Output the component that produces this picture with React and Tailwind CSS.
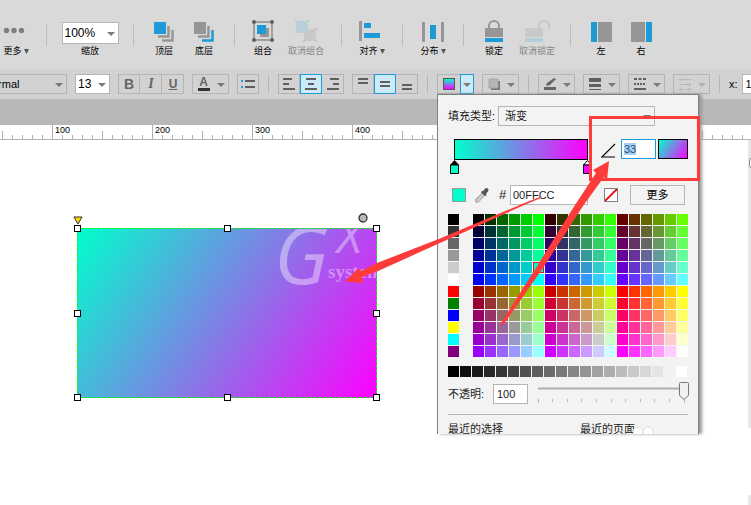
import React, { useEffect, useRef, useState } from 'react';

const hex = (n) => n.toString(16).padStart(2, '0');

const baseColors = [
  '#000000', '#333333', '#666666', '#999999', '#cccccc', '#ffffff',
  '#ff0000', '#008000', '#0000ff', '#ffff00', '#00ffff', '#800080',
];

// web safe colors, 3 blocks of 6x6 on top and 3 below
const webColors = [];
for (let row = 0; row < 12; row++) {
  for (let col = 0; col < 18; col++) {
    const r = (Math.floor(col / 6) + (row > 5 ? 3 : 0)) * 51;
    webColors.push(`#${hex(r)}${hex((col % 6) * 51)}${hex((row % 6) * 51)}`);
  }
}

const grays = Array.from({ length: 20 }, (_, i) => {
  const v = hex(Math.round((255 * i) / 19));
  return `#${v}${v}${v}`;
});

const rulerLabels = ['', '100', '200', '300', '400', '', '', ''];

const Caret = ({ className = 'text-[#7a7a7a]' }) => (
  <svg className={`w-2 h-1 shrink-0 ${className}`} viewBox="0 0 8 4" aria-hidden="true">
    <path d="M0 0h8L4 4z" fill="currentColor" />
  </svg>
);

const Select = ({ label, options, className, selectClass }) => (
  <div className={`relative border border-[#b5b5b5] overflow-hidden shrink-0 ${className}`}>
    <select aria-label={label} className={`block h-full w-full appearance-none bg-transparent outline-none ${selectClass}`}>
      {options.map((o) => (
        <option key={o}>{o}</option>
      ))}
    </select>
    <span className="absolute right-[3px] inset-y-0 flex items-center pt-px pointer-events-none">
      <Caret />
    </span>
  </div>
);

const Divider = () => <div className="w-px h-[22px] mt-6 mx-[10px] bg-[#bdbdbd] shrink-0" />;

const Tool = ({ label, menu, disabled, className = 'w-10', children }) => (
  <button
    type="button"
    disabled={disabled}
    className={`flex flex-col items-center shrink-0 pt-5 ${disabled ? 'text-[#858585]' : 'text-black'} ${className}`}
  >
    {children}
    <span className="flex items-center gap-[2px] mt-[2px] text-[9px] leading-[14px] whitespace-nowrap">
      {label}
      {menu && (
        <svg className="w-[5px] h-[5px]" viewBox="0 0 5 5" aria-hidden="true">
          <path d="M0 0h5L2.5 5z" fill="#555" />
        </svg>
      )}
    </span>
  </button>
);

const Sep = () => <div className="w-px h-[18px] mx-px bg-[#b5b5b5] shrink-0" />;

// group of 22px toolbar buttons
const ButtonGroup = ({ items, active }) => (
  <div className="flex h-5 shrink-0">
    {items.map((item, i) => (
      <button
        key={item.name}
        type="button"
        aria-label={item.name}
        className={`w-[22px] h-5 border flex items-center justify-center ${
          active === i ? 'border-[#1e9bd7] bg-[#cdeaf8]' : 'border-[#b5b5b5]'
        } ${i > 0 && active !== i ? 'border-l-transparent' : ''}`}
      >
        {item.icon}
      </button>
    ))}
  </div>
);

const SplitButton = ({ name, disabled, open, children }) => (
  <div className={`flex h-5 w-[37px] shrink-0 ${open ? '' : 'border border-[#b5b5b5]'}`}>
    <button
      type="button"
      aria-label={name}
      disabled={disabled}
      className={`flex-1 flex items-center justify-center ${open ? 'border border-r-0 border-[#b5b5b5]' : ''}`}
    >
      {children}
    </button>
    <button
      type="button"
      aria-label={`${name} menu`}
      disabled={disabled}
      className={`w-[14px] flex items-center justify-center pt-px ${open ? 'border border-[#1e9bd7] bg-[#cdeaf8]' : ''}`}
    >
      <Caret className={disabled ? 'text-[#b0b0b0]' : 'text-[#7a7a7a]'} />
    </button>
  </div>
);

const Lines = ({ d, w = 14, h = 14, color = '#5f5f5f' }) => (
  <svg width={w} height={h} viewBox={`0 0 ${w} ${h}`} aria-hidden="true">
    <path d={d} stroke={color} strokeWidth="2" fill="none" />
  </svg>
);

const MainToolbar = () => (
  <div className="flex items-start h-[69px] bg-[#d9d9d9] overflow-hidden">
    <Tool label="更多" menu className="w-9 pr-1">
      <svg width="28" height="22" viewBox="0 0 28 22" aria-hidden="true">
        <g fill="#7f7f7f">
          <circle cx="4.500" cy="10.500" r="2.700" />
          <circle cx="12" cy="10.500" r="2.700" />
          <circle cx="19.500" cy="10.500" r="2.700" />
        </g>
      </svg>
    </Tool>
    <Divider />
    <label className="w-[66px] pt-[22px] flex flex-col items-center shrink-0">
      <Select label="缩放" options={['100%', '50%', '200%']} className="w-[57px] h-[22px] bg-white" selectClass="pl-[2px] text-[12px]" />
      <span className="text-[9px] leading-[14px]">缩放</span>
    </label>
    <Divider />
    <Tool label="顶层">
      <svg width="22" height="22" viewBox="0 0 22 22" aria-hidden="true">
        <path d="M19.500 10v10.500H9M15.500 6v10.500H5" stroke="#969696" strokeWidth="2.500" fill="none" />
        <path d="M1 2h12v12H1z" fill="#1e9bd7" />
      </svg>
    </Tool>
    <Tool label="底层">
      <svg width="22" height="22" viewBox="0 0 22 22" aria-hidden="true">
        <path d="M15.500 6v10.500H5" stroke="#969696" strokeWidth="2.500" fill="none" />
        <path d="M19.500 10v10.500H9" stroke="#1e9bd7" strokeWidth="2.500" fill="none" />
        <path d="M1 2h12v12H1z" fill="#969696" />
      </svg>
    </Tool>
    <Divider />
    <Tool label="组合" className="w-9">
      <svg width="22" height="22" viewBox="0 0 22 22" aria-hidden="true">
        <path d="M2 2h18v18H2z" stroke="#666" fill="none" />
        <path d="M8 8h9v9H8z" fill="#969696" />
        <path d="M5 5h9v9H5z" fill="#1e9bd7" />
        <g fill="#5f5f5f">
          <circle cx="2" cy="2" r="2" />
          <circle cx="20" cy="2" r="2" />
          <circle cx="2" cy="20" r="2" />
          <circle cx="20" cy="20" r="2" />
        </g>
      </svg>
    </Tool>
    <Tool label="取消组合" disabled className="w-[50px]">
      <svg width="22" height="22" viewBox="0 0 22 22" aria-hidden="true">
        <path d="M9 9h12v12H9z" fill="#c9c9c9" />
        <path d="M1 1h12v12H1z" fill="#b9cfda" />
        <path d="M0 0h2v2H0zM12 0h2v2h-2zM0 11h2v2H0zM12 11h2v2h-2zM8 8h2v2H8zM20 8h2v2h-2zM8 20h2v2H8zM20 20h2v2h-2z" fill="#bfc5c8" />
      </svg>
    </Tool>
    <Divider />
    <Tool label="对齐" menu>
      <svg width="26" height="22" viewBox="0 0 26 22" aria-hidden="true">
        <path d="M0 1h3v20H0z" fill="#969696" />
        <path d="M5 3h7v5H5zM5 13h16v5H5z" fill="#1e9bd7" />
      </svg>
    </Tool>
    <Divider />
    <Tool label="分布" menu>
      <svg width="22" height="22" viewBox="0 0 22 22" aria-hidden="true">
        <path d="M0 2h3v20H0zM19 2h3v20h-3z" fill="#969696" />
        <path d="M8 5h6v14H8z" fill="#1e9bd7" />
      </svg>
    </Tool>
    <Divider />
    <Tool label="锁定">
      <svg width="22" height="22" viewBox="0 0 22 22" aria-hidden="true">
        <path d="M6 9V6a5 5 0 0 1 10 0V9" stroke="#969696" strokeWidth="2" fill="none" />
        <path d="M2 8h18v9H2z" fill="#969696" />
        <path d="M2 18h18v4H2z" fill="#1e9bd7" />
      </svg>
    </Tool>
    <Tool label="取消锁定" disabled className="w-[46px]">
      <svg width="26" height="22" viewBox="0 0 26 22" aria-hidden="true">
        <path d="M15 9V6a5 5 0 0 1 10 0v3" stroke="#c6c6c6" strokeWidth="2" fill="none" />
        <path d="M1 8h18v9H1z" fill="#c9c9c9" />
        <path d="M1 18h18v4H1z" fill="#b3cedb" />
      </svg>
    </Tool>
    <Divider />
    <Tool label="左">
      <svg width="22" height="22" viewBox="0 0 22 22" aria-hidden="true">
        <path d="M1 2h6v20H1z" fill="#1e9bd7" />
        <path d="M8 2h14v20H8z" fill="#969696" />
      </svg>
    </Tool>
    <Tool label="右">
      <svg width="22" height="22" viewBox="0 0 22 22" aria-hidden="true">
        <path d="M1 2h14v20H1z" fill="#969696" />
        <path d="M16 2h6v20h-6z" fill="#1e9bd7" />
      </svg>
    </Tool>
  </div>
);

const textButtons = [
  { name: 'Bold', icon: <span className="text-[14px] leading-4 font-bold text-[#666]">B</span> },
  { name: 'Italic', icon: <span className="text-[14px] leading-4 font-bold italic font-['Liberation_Serif',serif] text-[#666]">I</span> },
  { name: 'Underline', icon: <span className="text-[12px] leading-4 font-bold underline text-[#666]">U</span> },
];

const alignButtons = [
  { name: 'Align left', icon: <Lines d="M1 2h9M1 7h6M1 12h12" /> },
  { name: 'Align center', icon: <Lines d="M2 2h10M4 7h6M1 12h12" /> },
  { name: 'Align right', icon: <Lines d="M4 2h9M7 7h6M1 12h12" /> },
];

const valignButtons = [
  { name: 'Align top', icon: <Lines d="M2 2h10M2 6h10" /> },
  { name: 'Align middle', icon: <Lines d="M2 5h10M2 9h10" /> },
  { name: 'Align bottom', icon: <Lines d="M2 8h10M2 12h10" /> },
];

const Swatch = ({ color, selected, onClick }) => (
  <button
    type="button"
    aria-label={color}
    onClick={onClick}
    className={`w-[11px] h-[11px] ${selected ? 'border border-[#d02020]' : ''}`}
    style={{ backgroundColor: color }}
  />
);

const FillPanel = () => {
  const angleRef = useRef(null);
  const [color, setColor] = useState('#00ffcc');
  const [angle, setAngle] = useState('33');
  const [opacity, setOpacity] = useState(100);

  useEffect(() => {
    angleRef.current.focus();
    angleRef.current.select();
  }, []);

  return (
    <div className="absolute top-full left-0 z-10 w-[262px] pl-[10px] pr-2 pt-[11px] bg-[#f3f3f3] border border-b-0 border-[#808080] shadow-[3px_0_3px_#999] text-[11px] text-[#222]">
      {/* Fill type */}
      <div className="flex items-center h-5">
        <span className="w-[50px] whitespace-nowrap">填充类型:</span>
        <Select label="填充类型" options={['渐变', '纯色']} className="w-[157px] h-5" selectClass="pl-[6px] text-[11px]" />
      </div>

      {/* Gradient stops and angle */}
      <div className="flex items-start mt-[13px] h-9">
        <div className="w-[142px] pl-[2px] shrink-0">
          <div className="ml-1 w-[134px] h-[21px] border border-black bg-[linear-gradient(90deg,#00ffcc,#ff00ff)]" />
          <div className="flex justify-between w-[142px]">
            <svg width="9" height="14" viewBox="0 0 9 14" aria-hidden="true">
              <path d="M0 5L4.500 0 9 5z" fill="#000" />
              <path d="M.5 5h8v8.500h-8z" fill="#00ffcc" stroke="#000" />
            </svg>
            <svg width="9" height="14" viewBox="0 0 9 14" aria-hidden="true">
              <path d="M.5 5L4.500.5 8.500 5z" fill="#fff" stroke="#000" />
              <path d="M.5 5h8v8.500h-8z" fill="#ff00ff" stroke="#000" />
            </svg>
          </div>
        </div>
        <svg className="ml-[11px] mt-1 shrink-0" width="15" height="15" viewBox="0 0 15 15" aria-hidden="true">
          <path d="M14 1L.8 14H14" fill="none" stroke="#000" strokeWidth="1.200" />
        </svg>
        <input
          ref={angleRef}
          aria-label="角度"
          value={angle}
          onChange={(e) => setAngle(e.target.value)}
          className="ml-[5px] w-[35px] h-5 pl-[2px] bg-white border border-[#1e9bd7] outline-none text-[11px] selection:bg-[#a6cef4] selection:text-[#27507c]"
        />
        <div className="ml-[2px] w-[30px] h-5 border border-black bg-[linear-gradient(123deg,#00ffcc,#ff00ff)] shrink-0" />
      </div>

      {/* Color value */}
      <div className="flex items-center mt-[10px] h-5">
        <div className="ml-1 w-[14px] h-[14px] border border-[#999]" style={{ backgroundColor: color }} />
        <button type="button" aria-label="取色" className="ml-2">
          <svg width="16" height="18" viewBox="0 0 16 18" aria-hidden="true">
            <path d="M8.500 7l2.500 2-6 6.500-2.500 1-1-1 .5-2.500z" fill="#ccc" stroke="#999" />
            <path d="M7.500 5.500l4.500 4" stroke="#555" strokeWidth="2" />
            <path d="M10.500 6.500L12.500 4" stroke="#555" strokeWidth="4" strokeLinecap="round" />
          </svg>
        </button>
        <label htmlFor="hex" className="ml-[9px] w-[11px] text-[13px]">#</label>
        <input
          id="hex"
          value={color.slice(1).toUpperCase()}
          onChange={(e) => setColor(`#${e.target.value}`)}
          className="w-[78px] h-5 pl-[2px] bg-white border border-[#b5b5b5] outline-none text-[11px]"
        />
        <button type="button" aria-label="无填充" className="ml-4 w-[14px] h-[14px] border border-[#808080] bg-white">
          <svg className="w-3 h-3" viewBox="0 0 12 12" aria-hidden="true">
            <path d="M0 12L12 0" stroke="#e00" strokeWidth="1.800" />
          </svg>
        </button>
        <button type="button" className="ml-3 w-[55px] h-5 border border-[#b5b5b5] text-black">更多</button>
      </div>

      {/* Palette */}
      <div className="flex gap-[14px] mt-[9px]">
        <div className="grid grid-cols-[11px] gap-px">
          {baseColors.map((c) => (
            <Swatch key={c} color={c} onClick={() => setColor(c)} />
          ))}
        </div>
        <div className="grid grid-cols-[repeat(18,11px)] gap-px">
          {webColors.map((c) => (
            <Swatch key={c} color={c} selected={c === color} onClick={() => setColor(c)} />
          ))}
        </div>
      </div>
      <div className="flex gap-px mt-[9px]">
        {grays.map((c) => (
          <Swatch key={c} color={c} onClick={() => setColor(c)} />
        ))}
      </div>

      {/* Opacity */}
      <div className="flex items-center mt-[7px] h-5">
        <label htmlFor="opacity" className="w-[45px] whitespace-nowrap">不透明:</label>
        <input
          id="opacity"
          value={opacity}
          onChange={(e) => setOpacity(Number(e.target.value) || 0)}
          className="w-[35px] h-5 pl-[3px] bg-white border border-[#b5b5b5] outline-none text-[11px]"
        />
        <div className="relative w-[152px] h-6 ml-[10px] shrink-0">
          <svg width="152" height="24" viewBox="0 0 152 24" aria-hidden="true">
            <path d="M0 6.500h146" stroke="#b0b0b0" strokeWidth="2" />
            <path d="M.5 17v4M14.500 17v3M29.500 17v3M43.500 17v3M58.500 17v3M73.500 17v3M87.500 17v3M102.500 17v3M116.500 17v3M131.500 17v3M146.500 18v3" stroke="#bbb" />
            <path d="M141.500 1.500q0-1 1-1h7q1 0 1 1v12l-4.500 4-4.500-4z" fill="#f0f0f0" stroke="#777" />
          </svg>
          <input
            type="range"
            aria-label="不透明"
            min="0"
            max="100"
            value={opacity}
            onChange={(e) => setOpacity(Number(e.target.value))}
            className="absolute inset-0 w-full opacity-0"
          />
        </div>
      </div>

      {/* Recent */}
      <div className="mt-[10px] mr-[2px] border-t border-[#b5b5b5]" />
      <div className="grid grid-cols-[132px_1fr] mt-[6px] h-[13px] leading-4 overflow-hidden">
        <span>最近的选择</span>
        <span className="flex">
          最近的页面
          <svg className="-ml-[2px] mt-1" width="22" height="10" viewBox="0 0 22 10" aria-hidden="true">
            <circle cx="5" cy="7" r="5" fill="#fff" stroke="#ddd" />
            <circle cx="15" cy="7" r="5" fill="#fff" stroke="#ddd" />
          </svg>
        </span>
      </div>
    </div>
  );
};

const FormatToolbar = () => (
  <div className="flex items-center gap-2 h-[30px] bg-[#d2d2d2]">
    <Select
      label="Style"
      options={['Normal']}
      className="w-[67px] h-5 border-l-0"
      selectClass="-ml-4 text-[11px]"
    />
    <Select label="Font size" options={['13', '12', '14']} className="w-[35px] h-5 bg-white" selectClass="pl-[2px] text-[12px]" />
    <ButtonGroup items={textButtons} />
    <SplitButton name="Text color">
      <span className="flex flex-col items-center">
        <span className="text-[12px] leading-[11px] font-bold text-[#666]">A</span>
        <span className="w-3 h-[3px] bg-[#333]" />
      </span>
    </SplitButton>
    <ButtonGroup
      items={[
        {
          name: 'Bullets',
          icon: (
            <svg width="14" height="14" viewBox="0 0 14 14" aria-hidden="true">
              <path d="M4 4h10M4 10h10" stroke="#5f5f5f" strokeWidth="2" />
              <path d="M0 4h2M0 10h2" stroke="#1e9bd7" strokeWidth="2" />
            </svg>
          ),
        },
      ]}
    />
    <Sep />
    <ButtonGroup items={alignButtons} active={1} />
    <ButtonGroup items={valignButtons} active={1} />
    <Sep />
    <div className="relative shrink-0">
      <SplitButton name="Fill" open>
        <span className="w-3 h-3 border border-[#555] bg-[linear-gradient(180deg,#00ffcc,#ff00ff)]" />
      </SplitButton>
      <FillPanel />
    </div>
    <SplitButton name="Shadow">
      <svg width="12" height="12" viewBox="0 0 12 12" aria-hidden="true">
        <path d="M3 3h9v9H3z" fill="#777" />
        <path d="M1 1h9v9H1z" fill="#b5b5b5" stroke="#a5a5a5" />
      </svg>
    </SplitButton>
    <Sep />
    <SplitButton name="Line color">
      <svg width="14" height="14" viewBox="0 0 14 14" aria-hidden="true">
        <path d="M3 8l1-2 7-5 2 1-6 6-3 1z" fill="#666" />
        <path d="M1 10h12v3H1z" fill="#666" />
      </svg>
    </SplitButton>
    <SplitButton name="Line width">
      <svg width="14" height="14" viewBox="0 0 14 14" aria-hidden="true">
        <path d="M1 1h12v4H1zM1 7h12v3H1zM1 12h12v1H1z" fill="#5f5f5f" />
      </svg>
    </SplitButton>
    <SplitButton name="Line style">
      <svg width="14" height="14" viewBox="0 0 14 14" aria-hidden="true">
        <path d="M1 2h12" stroke="#5f5f5f" strokeWidth="2" strokeDasharray="3 1.500" />
        <path d="M1 7h12" stroke="#5f5f5f" strokeWidth="2" strokeDasharray="2 1" />
        <path d="M1 12h12" stroke="#5f5f5f" strokeWidth="2" />
      </svg>
    </SplitButton>
    <SplitButton name="Arrow style" disabled>
      <svg width="14" height="14" viewBox="0 0 14 14" aria-hidden="true">
        <path d="M1 2.500h12M1 7.500h12M1 12.500h12M3 1L1 2.500 3 4M11 6l2 1.500L11 9M3 11l-2 1.500L3 14M11 11l2 1.500-2 1.500" stroke="#b8b8b8" fill="none" />
      </svg>
    </SplitButton>
    <Sep />
    <label className="flex items-center gap-1 shrink-0 text-[11px]">
      x:
      <input defaultValue="120" className="w-12 h-5 pl-[3px] bg-white border border-[#b5b5b5] text-[11px]" />
    </label>
  </div>
);

const Ruler = () => (
  <div className="flex h-[15px] bg-white border-b border-[#b0b0b0] overflow-hidden">
    {rulerLabels.map((label, i) => (
      <div key={i} className="grid w-[100px] h-[14px] shrink-0 border-l border-[#b0b0b0] first:-ml-12">
        <span className="col-start-1 row-start-1 pl-[2px] text-[9px] leading-[11px]">{label}</span>
        <svg className="col-start-1 row-start-1 w-[99px] h-[14px]" viewBox="0 0 99 14" aria-hidden="true">
          <path
            d="M9.500 10v4M19.500 10v4M29.500 10v4M39.500 10v4M49.500 6v8M59.500 10v4M69.500 10v4M79.500 10v4M89.500 10v4"
            stroke="#b0b0b0"
          />
        </svg>
      </div>
    ))}
  </div>
);

const Handle = ({ className }) => (
  <span className={`absolute w-[7px] h-[7px] bg-white border border-black ${className}`} />
);

const Canvas = () => (
  <div className="relative flex-1 min-h-[365px] bg-white">
    <div className="absolute left-[77px] top-[88px] w-[300px] h-[170px] bg-[linear-gradient(123deg,#00ffcc,#ff00ff)]">
      <div className="absolute inset-0 overflow-hidden border border-dashed border-[#00ff00] text-white/40">
        <span className="absolute left-[196px] -top-2 text-[80px] leading-[64px] italic font-['Open_Sans',sans-serif]">G</span>
        <span className="absolute left-[259px] -top-[10px] text-[48px] leading-8 italic font-['Open_Sans',sans-serif]">X</span>
        <span className="absolute left-[250px] top-[33px] text-[19px] leading-5 font-bold font-['Liberation_Serif',serif]">system</span>
      </div>
      <Handle className="-left-[3px] -top-[3px]" />
      <Handle className="left-[147px] -top-[3px]" />
      <Handle className="-right-[3px] -top-[3px]" />
      <Handle className="-left-[3px] top-[82px]" />
      <Handle className="-right-[3px] top-[82px]" />
      <Handle className="-left-[3px] -bottom-[3px]" />
      <Handle className="left-[147px] -bottom-[3px]" />
      <Handle className="-right-[3px] -bottom-[3px]" />
      <svg className="absolute -left-[4px] -top-[12px]" width="10" height="9" viewBox="0 0 10 9" aria-hidden="true">
        <path d="M1 1h8L5 8z" fill="#ffd800" stroke="#333" />
      </svg>
      <svg className="absolute right-[9px] -top-[15px]" width="10" height="10" viewBox="0 0 10 10" aria-hidden="true">
        <circle cx="5" cy="5" r="4" fill="#bbb" stroke="#333" strokeWidth="1.300" />
      </svg>
    </div>
    {/* Scrollbar */}
    <div className="absolute right-0 top-0 w-[3px] h-[288px] bg-[#e8e8e8] overflow-hidden">
      <div className="mt-[17px] ml-px w-3 h-3 rounded-sm border border-[#888] bg-white" />
    </div>
    <div className="absolute right-0 bottom-0 w-[3px] h-[10px] bg-[#e8e8e8]" />
  </div>
);

const Annotations = () => (
  <svg className="absolute left-0 top-0 z-20 pointer-events-none" width="751" height="505" viewBox="0 0 751 505" aria-hidden="true">
    <g fill="#fc3b3a">
      <path d="M345 281.500L358 268.500 361 271 377 263 440 238.500 522 204 541 196.500 541 198 522 206 440 243 377 271.500 362 277 363 283z" />
      <path d="M501 323L539 263 575 205 596 173 593 170 609 161 607 180 604 177 583 206 543 268 503 325 501 325z" />
    </g>
    <path d="M590.500 117.500h108v62h-108z" fill="none" stroke="#fc3b3a" strokeWidth="3" />
  </svg>
);

const App = () => {
  return (
    <div className="relative flex flex-col min-h-screen overflow-hidden bg-white text-black font-['Liberation_Sans','Noto_Sans_CJK_SC',sans-serif]">
      <MainToolbar />
      <FormatToolbar />
      <div className="h-[26px] bg-[#b8b8b8]" />
      <Ruler />
      <Canvas />
      <Annotations />
    </div>
  );
};

export default App;
